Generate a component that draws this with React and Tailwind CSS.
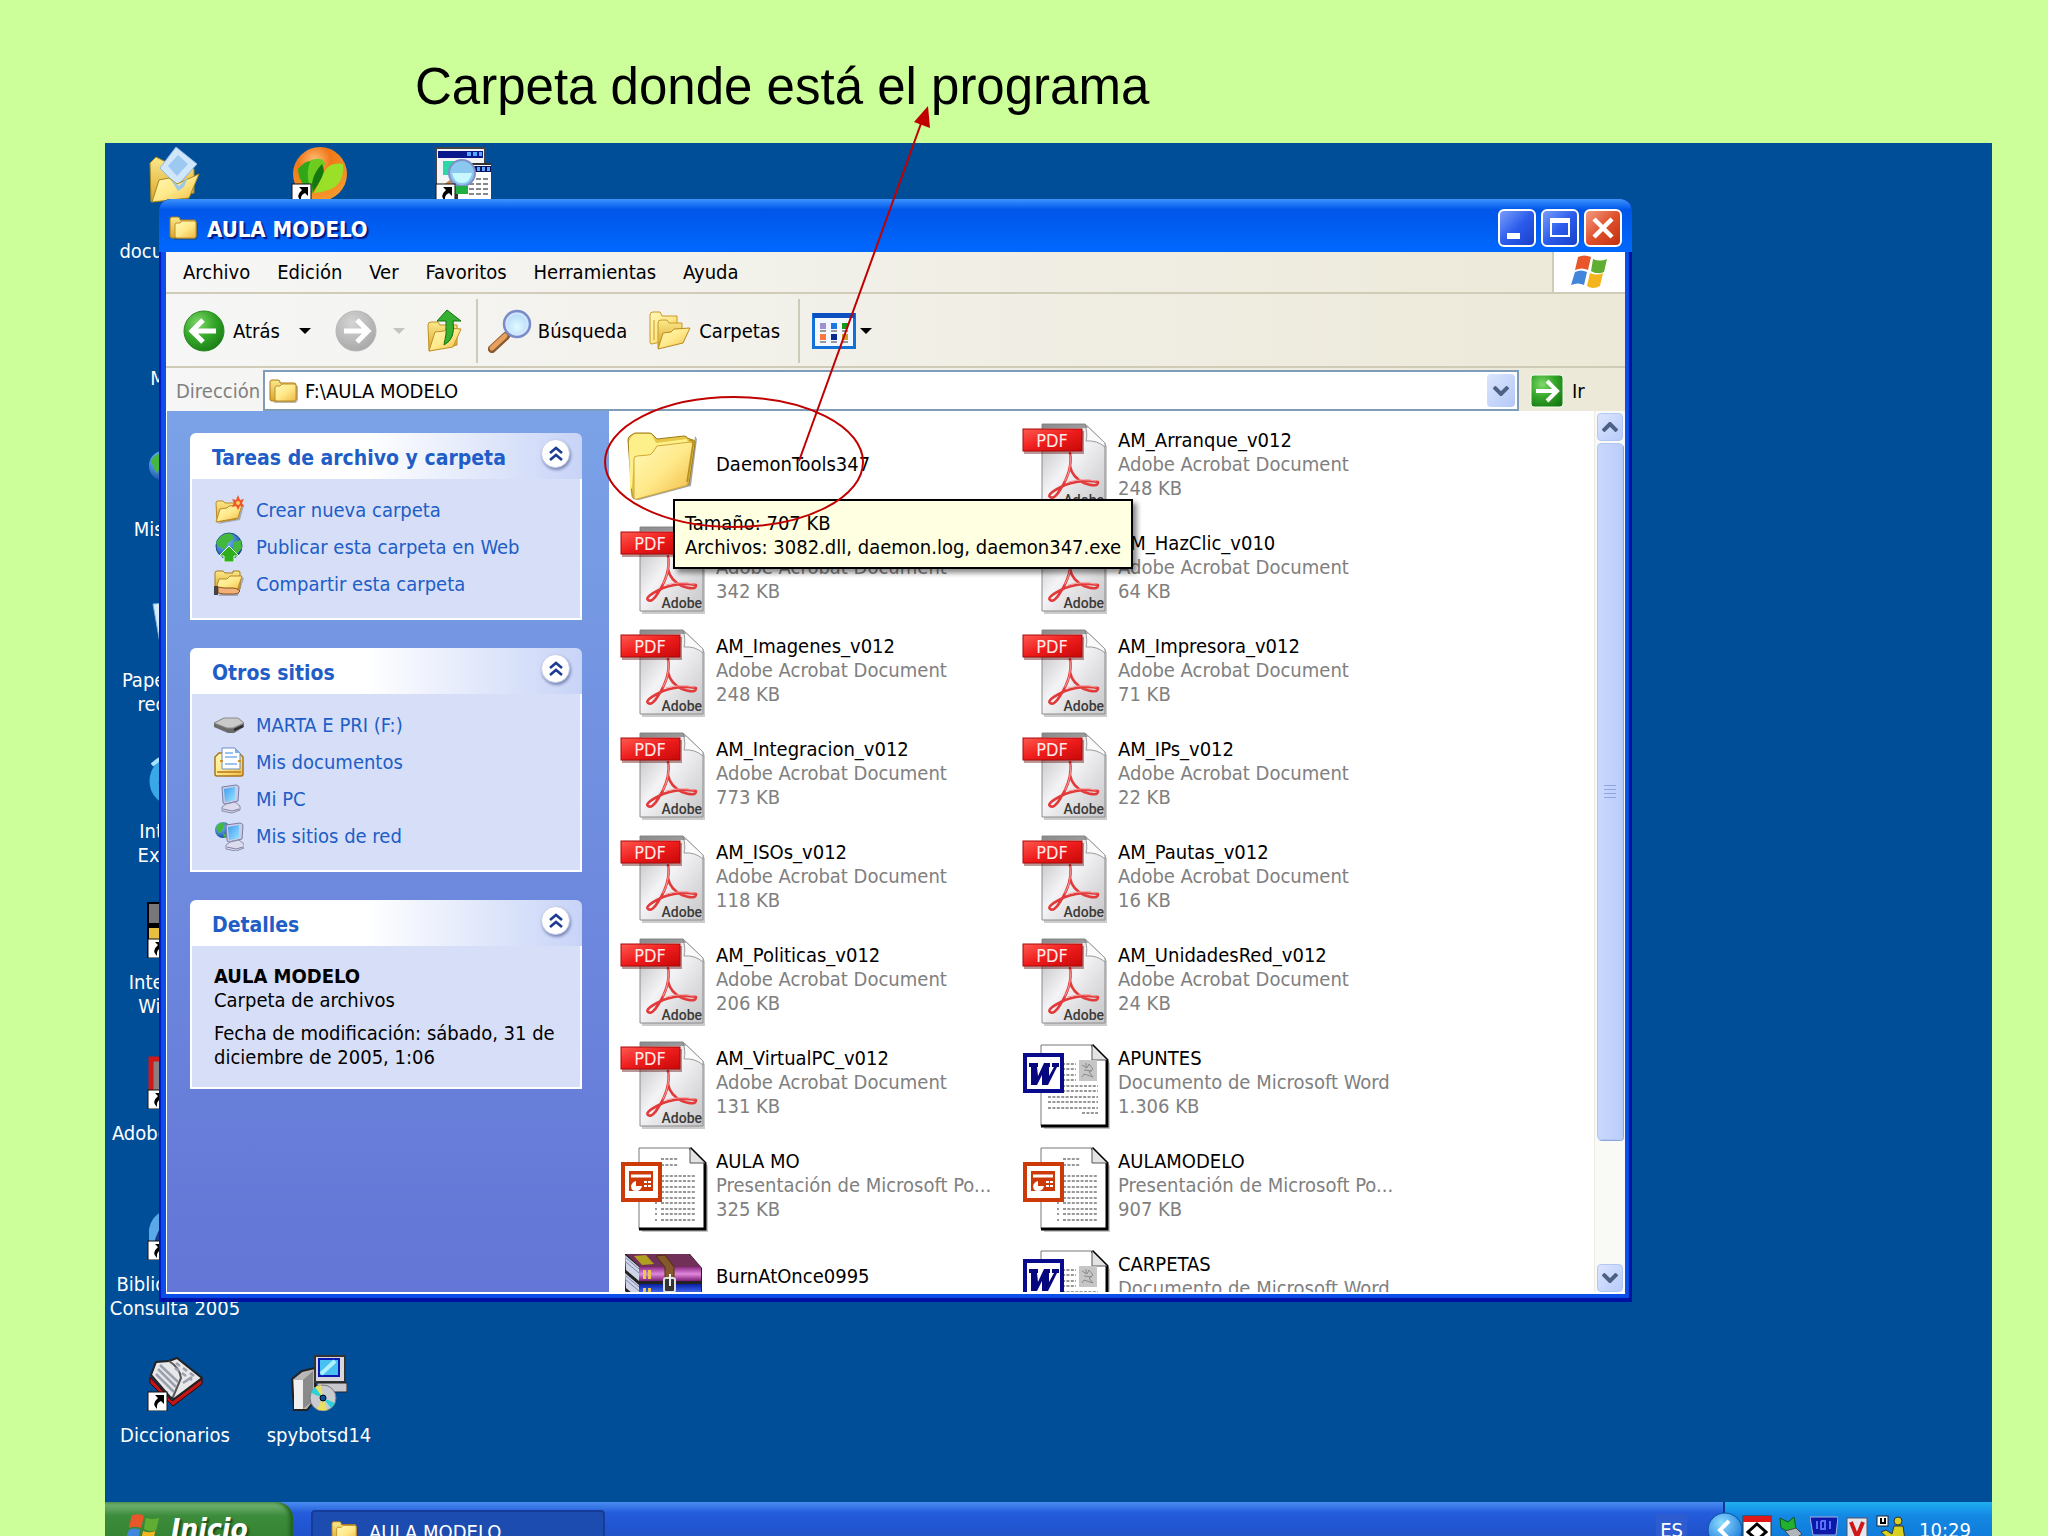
import React from "react";

/* ---------- shared gradients ---------- */
function Gradients() {
  return (
    <defs>
      <linearGradient id="gFolder" x1="0" y1="0" x2="1" y2="1">
        <stop offset="0" stopColor="#fff9b8" />
        <stop offset="0.5" stopColor="#ffe98a" />
        <stop offset="1" stopColor="#f0b840" />
      </linearGradient>
      <linearGradient id="gFolderBack" x1="0" y1="0" x2="0" y2="1">
        <stop offset="0" stopColor="#fbe98b" />
        <stop offset="1" stopColor="#d9a52a" />
      </linearGradient>
      <linearGradient id="gPage" x1="0" y1="0" x2="1" y2="1">
        <stop offset="0" stopColor="#b4b4b6" />
        <stop offset="0.45" stopColor="#f4f4f6" />
        <stop offset="0.7" stopColor="#dedee0" />
        <stop offset="1" stopColor="#c6c6c8" />
      </linearGradient>
      <linearGradient id="gPdf" x1="0" y1="0" x2="1" y2="1">
        <stop offset="0" stopColor="#ff5a50" />
        <stop offset="0.5" stopColor="#ee1c1c" />
        <stop offset="1" stopColor="#c80808" />
      </linearGradient>
      <radialGradient id="gGreen" cx="0.35" cy="0.3" r="0.8">
        <stop offset="0" stopColor="#7fd96a" />
        <stop offset="0.5" stopColor="#35a62a" />
        <stop offset="1" stopColor="#177a14" />
      </radialGradient>
      <radialGradient id="gGrey" cx="0.4" cy="0.3" r="0.8">
        <stop offset="0" stopColor="#d4d4d4" />
        <stop offset="1" stopColor="#a4a4a4" />
      </radialGradient>
      <radialGradient id="gLens" cx="0.5" cy="0.6" r="0.6">
        <stop offset="0" stopColor="#e4fbff" />
        <stop offset="1" stopColor="#a9d4f8" />
      </radialGradient>
      <linearGradient id="gScreen" x1="0" y1="0" x2="1" y2="1">
        <stop offset="0" stopColor="#3f9af0" />
        <stop offset="1" stopColor="#9be4ff" />
      </linearGradient>
      <radialGradient id="gGlobe" cx="0.35" cy="0.3" r="0.8">
        <stop offset="0" stopColor="#7cc4ff" />
        <stop offset="1" stopColor="#0c3f9c" />
      </radialGradient>
      <radialGradient id="gOrange" cx="0.4" cy="0.25" r="0.85">
        <stop offset="0" stopColor="#ffc07a" />
        <stop offset="0.35" stopColor="#f07818" />
        <stop offset="1" stopColor="#f8a030" />
      </radialGradient>
      <linearGradient id="gPurple" x1="0" y1="0" x2="0" y2="1">
        <stop offset="0" stopColor="#8c2a84" />
        <stop offset="0.5" stopColor="#e088dc" />
        <stop offset="1" stopColor="#7a1c74" />
      </linearGradient>
      <linearGradient id="gBlueBook" x1="0" y1="0" x2="0" y2="1">
        <stop offset="0" stopColor="#0820a0" />
        <stop offset="0.5" stopColor="#4068f0" />
        <stop offset="1" stopColor="#081880" />
      </linearGradient>
      <radialGradient id="gTray" cx="0.4" cy="0.3" r="0.8">
        <stop offset="0" stopColor="#8fdcff" />
        <stop offset="1" stopColor="#0d6fd6" />
      </radialGradient>
    </defs>
  );
}

/* ---------- icons ---------- */
function SmallFolder({ className }) {
  return (
    <svg viewBox="0 0 30 26" className={className} aria-hidden="true">
      <path d="M5 25h22l2-3V8H9z" fill="#3a3a20" opacity=".35" />
      <path d="M1 4q0-2 2-2h6q2 0 2 2v1h14q2 0 2 2v14q0 2-2 2H3q-2 0-2-2z" fill="url(#gFolderBack)" stroke="#a8791a" />
      <path d="M6 10q0-2 2-2h3l2-2h12q2 0 2 2v13q0 2-2 2H8q-2 0-2-2z" fill="url(#gFolder)" stroke="#c0902c" />
    </svg>
  );
}

function OpenFolder({ className, children }) {
  return (
    <svg viewBox="0 0 30 30" className={className} aria-hidden="true">
      <path d="M4 29l22-4 4-15-3-2z" fill="#333" opacity=".3" />
      <path d="M2 8q0-2 2-2h5l2 2h12v16L3 27z" fill="url(#gFolderBack)" stroke="#b98a22" />
      <path d="M2 27l4-13 7-1 2-2 13-1-4 13z" fill="url(#gFolder)" stroke="#b98a22" />
      {children}
    </svg>
  );
}

function BigFolder() {
  return (
    <svg viewBox="0 0 88 96" className="h-24 w-[88px] shrink-0" aria-hidden="true">
      <path d="M12 83l57-15 6-48 2 3-6 47-52 14z" fill="#000" opacity=".35" />
      <path
        d="M8 24q0-3 2-4l3-2q1-1 3-1h13q3 0 4 2l4 4 27-3q3 0 3 2l6 2q2 0 2 3l-6 41-53 14q-4 1-4-3z"
        fill="#e8c648" stroke="#9c7c18"
      />
      <path d="M9 26q1-4 4-7l3-1h13q3 0 4 3l3 6 31-4 1 4-31 3-7 9-16 2-2 30-2 6z" fill="#fdf08a" />
      <path d="M14 43q0-3 3-3l11-1q3 0 5-3l4-6 33-4q3 0 3 3l-5 38q0 2-3 3l-48 13q-3 1-3-3z" fill="url(#gFolder)" stroke="#d2a834" />
      <path d="M69 24q5 0 4 4l-6 38" fill="none" stroke="#b4901e" strokeWidth="1.6" />
    </svg>
  );
}

function PdfIcon() {
  return (
    <svg viewBox="0 0 88 96" className="h-24 w-[88px] shrink-0" aria-hidden="true">
      <path d="M21 9h43l20 19v65H21z" fill="#000" opacity=".2" transform="translate(1 2)" />
      <path d="M20 8h43l20 19v65H20z" fill="url(#gPage)" stroke="#8c8c8e" />
      <path d="M63 8q3 10 1 17 11-1 19 6v-4z" fill="#fafafa" stroke="#9a9a9a" />
      <path d="M20 8h43l3 4H20z" fill="#7a7a7c" opacity=".7" />
      <g fill="none" stroke="#e23a3a" strokeLinecap="round" strokeLinejoin="round">
        <path d="M48 37Q51 54 38 74Q32 84 28 81T43 69Q60 63 76 66Q76 72 62 67Q50 61 48 50" strokeWidth="2.6" />
        <path d="M48 39q2 14-5 26M46 66q14-4 28-1" stroke="#f7a0a0" strokeWidth="1" />
      </g>
      <rect x="2" y="15" width="60" height="23" fill="#500" opacity=".4" />
      <rect x="1" y="13" width="59" height="22" fill="url(#gPdf)" stroke="#a80808" />
      <text x="30" y="31" textAnchor="middle" fontSize="18" fill="#ffe8e8" fontFamily="'DejaVu Sans Condensed','DejaVu Sans',sans-serif">PDF</text>
      <text x="82" y="89" textAnchor="end" fontSize="14" fill="#3a3a3a" fontWeight="500" fontFamily="Roboto,'Liberation Sans',sans-serif">Adobe</text>
    </svg>
  );
}

function PaperBase({ children }) {
  return (
    <svg viewBox="0 0 88 96" className="h-24 w-[88px] shrink-0" aria-hidden="true">
      <path d="M22 13h50l16 16v66H22z" fill="#000" opacity=".22" />
      <path d="M19 11h51l15 15v66H19z" fill="#fff" stroke="#777" />
      <path d="M70 11l15 15v66H19" fill="none" stroke="#000" strokeWidth="3" />
      <path d="M70 11v15h15z" fill="#e4e4e4" stroke="#555" />
      {children}
    </svg>
  );
}

function WordIcon() {
  return (
    <PaperBase>
      <path
        d="M40 30h14M40 35h14M40 41h14M40 46h14M40 52h36M40 57h36M26 63h50M26 68h50M26 74h50M60 79h16"
        stroke="#777" strokeWidth="1.6" strokeDasharray="3 1.4"
      />
      <rect x="57" y="26" width="18" height="21" fill="#c6c6c6" />
      <path d="M60 31l5 3 2-4 4 5-4 3 4 5-9-3-2 3m2-7l8 1M64 29v5" stroke="#8a8a8a" fill="none" />
      <rect x="3" y="21" width="37" height="36" fill="#fff" stroke="#0a0a8c" strokeWidth="4" />
      <path d="M7 29h9v4h-1l1 9 6-13h6v4h-1l0 9 5-9h-2v-4h7v4h-2l-9 18h-6l0-10-5 10h-6L9 33H7z" fill="#06067e" />
    </PaperBase>
  );
}

function PowerPointIcon() {
  return (
    <PaperBase>
      <path
        d="M41 22h17M41 28h17M41 39h35M41 44h35M41 50h35M41 55h35M41 61h35M41 66h35M41 72h35M41 77h35M41 83h35M35 66h2M35 72h2M35 77h2M35 83h2"
        stroke="#777" strokeWidth="1.6" strokeDasharray="3 1.4"
      />
      <rect x="3" y="27" width="37" height="36" fill="#fff" stroke="#cc3a08" strokeWidth="4" />
      <rect x="9" y="34" width="24" height="20" fill="#cc3a08" />
      <path d="M11 39h20" stroke="#fff" strokeWidth="3" />
      <path d="M24 45h3m1 0h3M24 49h3m1 0h3" stroke="#fff" strokeWidth="2" />
      <path d="M16 44v5h6q-1 5-6 5t-5-5q1-4 5-5z" fill="#fff" />
    </PaperBase>
  );
}

function RarIcon() {
  return (
    <svg viewBox="0 0 88 96" className="h-24 w-[88px] shrink-0" aria-hidden="true">
      <path d="M5 14h65l12 14v62H20L5 72z" fill="#222" />
      <path d="M5 15l14 12v14L6 30zM5 33l14 12v14L6 48zM5 51l14 12v14L6 66z" fill="#cfd4e6" />
      <path d="M6 18l13 11M6 22l13 11M6 36l13 11M6 40l13 11" stroke="#8088a8" />
      <path d="M6 14h63l12 13H20z" fill="#703058" />
      <path d="M14 16l12-1 8 9-12 1z" fill="#b0a020" />
      <rect x="19" y="27" width="62" height="14" fill="url(#gPurple)" />
      <rect x="19" y="44" width="62" height="17" fill="url(#gBlueBook)" />
      <rect x="19" y="63" width="62" height="17" fill="#208030" />
      <path d="M23 30h3v9h-3zM28 30h3v9h-3zM23 48h3v9h-3zM28 48h3v9h-3z" fill="#e8c850" />
      <path d="M36 16l9-1 9 12v53H45V27z" fill="#86592c" stroke="#50300c" />
      <rect x="44" y="38" width="11" height="14" rx="2" fill="#333" stroke="#ddd" strokeWidth="2" />
      <path d="M50 34v12" stroke="#eee" strokeWidth="2" />
    </svg>
  );
}

function WindowsFlag({ className }) {
  return (
    <svg viewBox="0 0 38 34" className={className} aria-hidden="true">
      <path d="M7 2q6-3 13 0l-3 13q-6-3-13 0z" fill="#e8562a" />
      <path d="M22 4q7 3 14 0l-3 13q-7 3-13-1z" fill="#5fae32" />
      <path d="M4 17q6-3 12 0l-3 13q-6-3-13 0z" fill="#4286dc" />
      <path d="M19 18q7 3 13 0l-3 13q-7 4-13 0z" fill="#f4b41e" />
    </svg>
  );
}

function RoundArrow({ forward }) {
  return (
    <svg viewBox="0 0 42 42" className="size-[42px]" aria-hidden="true">
      <circle cx="21" cy="21" r="20" fill={forward ? "url(#gGrey)" : "url(#gGreen)"} stroke={forward ? "#b8b8b8" : "#2a8a20"} />
      <path
        d={forward ? "M9 21h23M22 10l11 11-11 11" : "M33 21H10M20 10L9 21l11 11"}
        fill="none" stroke="#fff" strokeWidth="5"
      />
    </svg>
  );
}

function Caret({ className }) {
  return (
    <svg viewBox="0 0 12 6" className={className} aria-hidden="true">
      <path d="M0 0h12L6 6z" fill="currentColor" />
    </svg>
  );
}

function FolderUp() {
  return (
    <svg viewBox="0 0 36 44" className="h-11 w-9" aria-hidden="true">
      <path d="M1 16q0-3 3-3h7l2 3h17v20L2 42z" fill="url(#gFolderBack)" stroke="#c09028" />
      <path d="M2 42l6-19 9-1 3-3 14 1-8 18z" fill="url(#gFolder)" stroke="#c09028" />
      <path d="M20 1l14 11h-8q3 18-9 24 3-10 2-24h-9z" fill="#35b030" stroke="#147014" />
    </svg>
  );
}

function Magnifier() {
  return (
    <svg viewBox="0 0 44 44" className="size-11" aria-hidden="true">
      <path d="M4 40L18 27" stroke="#8a5a30" strokeWidth="8" strokeLinecap="round" />
      <path d="M4 39L17 27" stroke="#e8a060" strokeWidth="5" strokeLinecap="round" />
      <circle cx="29" cy="15" r="13" fill="url(#gLens)" stroke="#7a8cc8" strokeWidth="2.5" />
      <circle cx="29" cy="15" r="10.5" fill="none" stroke="#d8e4ff" strokeWidth="1.5" />
    </svg>
  );
}

function FoldersIcon() {
  return (
    <svg viewBox="0 0 42 40" className="h-10 w-[42px]" aria-hidden="true">
      <path d="M1 4q0-3 3-3h7l2 4h15v22L3 33q-2 0-2-2z" fill="url(#gFolder)" stroke="#c8982a" />
      <path d="M5 9v20" stroke="#c8982a" />
      <path d="M9 12q0-3 3-3h6l2 3h13v18L9 37z" fill="url(#gFolderBack)" stroke="#c8982a" />
      <path d="M9 38l5-16 8-1 3-3 16-1-7 15z" fill="url(#gFolder)" stroke="#b98a22" />
    </svg>
  );
}

function ViewsIcon() {
  return (
    <svg viewBox="0 0 44 36" className="h-9 w-11" aria-hidden="true">
      <rect x="1.5" y="1.5" width="41" height="33" fill="#f2f8ff" stroke="#1272d8" strokeWidth="3" />
      <rect x="1" y="0" width="42" height="5" fill="#0a50c0" />
      <rect x="8" y="10" width="6" height="6" fill="#a090d0" />
      <rect x="19" y="10" width="6" height="6" fill="#1a78e0" />
      <rect x="30" y="10" width="6" height="6" fill="#169a20" />
      <rect x="8" y="21" width="6" height="6" fill="#ff7840" />
      <rect x="19" y="21" width="6" height="6" fill="#0a2a90" />
      <rect x="30" y="21" width="6" height="6" fill="#d0a020" />
      <path d="M8 18h6M19 18h6M30 18h6M8 29h6M19 29h6M30 29h6" stroke="#999" strokeWidth="2" />
    </svg>
  );
}

function NewFolder() {
  return (
    <OpenFolder className="size-[30px]">
      <path d="M24 0l2 5 4-1-2 4 2 4-4-1-2 4-2-4-4 1 2-4-2-4 4 1z" fill="#f0562a" />
      <circle cx="24" cy="8" r="2" fill="#ffd060" />
    </OpenFolder>
  );
}

function Globe({ className, children }) {
  return (
    <svg viewBox="0 0 30 30" className={className} aria-hidden="true">
      <circle cx="15" cy="14" r="13" fill="url(#gGlobe)" stroke="#1a4a80" />
      <path d="M5 6q6-6 13-4l2 5-6 4-3 6-6-2-3-4zM20 10l7-2 1 8-5 6-5-3z" fill="#43b83c" />
      {children}
    </svg>
  );
}

function PublishIcon() {
  return (
    <Globe className="size-[30px]">
      <path d="M15 14l10 10h-5v6H10v-6H5z" fill="#2fae1e" stroke="#e8ffe0" />
    </Globe>
  );
}

function ShareIcon() {
  return (
    <svg viewBox="0 0 30 30" className="size-[30px]" aria-hidden="true">
      <path d="M4 27h20l6-18-3-1z" fill="#333" opacity=".3" />
      <path d="M1 4q0-2 2-2h6l2 2h8V2h6q1 0 1 2v16H1z" fill="url(#gFolderBack)" stroke="#a8791a" />
      <path d="M2 20l3-10h8l3-3h12l-5 15H3z" fill="url(#gFolder)" stroke="#b98a22" />
      <path d="M4 18l6 1h9q4 0 7 3-2 3-5 3H10l-6-1z" fill="#f0b078" stroke="#8a5420" />
      <path d="M0 17h4v9H0z" fill="#444" />
    </svg>
  );
}

function DriveIcon() {
  return (
    <svg viewBox="0 0 30 30" className="size-[30px]" aria-hidden="true">
      <path d="M0 13l10-5h14l6 5v4l-10 6h-6L0 17z" fill="#6a6a6a" />
      <path d="M0 13l10-5h14l6 5-11 5h-6z" fill="#c9c9c9" stroke="#8a8a8a" />
      <path d="M20 20l9-4" stroke="#2a2a2a" strokeWidth="2" />
    </svg>
  );
}

function DocsIcon() {
  return (
    <svg viewBox="0 0 30 30" className="size-[30px]" aria-hidden="true">
      <path d="M1 10l4-4h20l4 4v17q0 2-2 2H3q-2 0-2-2z" fill="url(#gFolder)" stroke="#a8761c" strokeWidth="1.5" />
      <path d="M8 1h13l5 5v16H8z" fill="#fff" stroke="#6a8cc8" />
      <path d="M21 1v5h5z" fill="#7ab0f0" />
      <path d="M11 6h8M11 10h12M11 17h12" stroke="#7aaef0" strokeWidth="1.5" />
      <path d="M6 14h3M24 14h3M3 25h24" stroke="#c89030" strokeWidth="2" />
    </svg>
  );
}

function PcShape() {
  return (
    <>
      <path d="M8 3l14-2q2 0 3 2l-1 14-13 3q-2 0-2-2z" fill="#c8cce4" stroke="#7a7ea8" />
      <path d="M10 5l11-2v13l-10 2z" fill="url(#gScreen)" />
      <path d="M12 20l9-2 5 4v4l-8 3-10-2v-4z" fill="#dcdcee" stroke="#8a8aa8" />
      <path d="M9 25l9 2 7-2" fill="none" stroke="#8080a0" />
    </>
  );
}

function PcIcon({ className = "size-[30px]" }) {
  return (
    <svg viewBox="0 0 30 30" className={className} aria-hidden="true">
      <PcShape />
    </svg>
  );
}

function NetworkIcon({ className = "size-[30px]" }) {
  return (
    <svg viewBox="0 0 30 30" className={className} aria-hidden="true">
      <circle cx="9" cy="9" r="8" fill="url(#gGlobe)" />
      <path d="M2 6q4-5 9-4l-2 6-4 5zM9 12l4 2-3 3z" fill="#43b83c" />
      <g transform="translate(4 1)"><PcShape /></g>
    </svg>
  );
}

function ShortcutArrow() {
  return (
    <g>
      <rect x="1" y="37" width="19" height="19" fill="#fff" stroke="#111" />
      <path d="M8 40h9v9l-3-3q-5 2-4 8-6-5 1-11z" fill="#000" />
    </g>
  );
}

function DesktopSvg({ children }) {
  return (
    <svg viewBox="0 0 56 56" className="size-14" aria-hidden="true">{children}</svg>
  );
}

const desktopIcons = {
  docs: (
    <DesktopSvg>
      <path d="M3 16l6-6 8 4 30 8v24L4 55z" fill="url(#gFolderBack)" stroke="#a8861c" />
      <path d="M29 0l21 17-20 22-17-18z" fill="#cfe6fb" stroke="#8ab8e8" />
      <path d="M31 8l10 9-11 12-9-10z" fill="#9cc8f2" />
      <path d="M5 55l7-22 10-2 8 6 22-10-10 24z" fill="url(#gFolder)" stroke="#a8861c" />
      <path d="M24 33l8 6 9-9-4 10-6 4z" fill="#9cc8e8" />
    </DesktopSvg>
  ),
  leaf: (
    <DesktopSvg>
      <circle cx="29" cy="27" r="27" fill="url(#gOrange)" />
      <path d="M7 22q8-10 17-8l-2 32Q8 38 7 22z" fill="#2fa818" />
      <path d="M20 13q12-4 14 4l-6 14-7 14q-8-18-1-32z" fill="#6ccc20" />
      <path d="M31 17q4 8-1 16l-8 12q-4-14 9-28z" fill="#14780e" />
      <path d="M52 17Q36 14 31 30l-8 16q32-2 29-29z" fill="#9adf28" />
      <ShortcutArrow />
    </DesktopSvg>
  ),
  search: (
    <DesktopSvg>
      <rect x="1" y="1" width="49" height="46" fill="#f4f4f4" stroke="#444" strokeWidth="2" />
      <rect x="3" y="4" width="45" height="7" fill="#0a1a8c" />
      <path d="M32 7h4m2 0h4m2 0h3" stroke="#58a8ff" strokeWidth="4" />
      <path d="M8 14h16v14H8z" fill="#2ad8a8" />
      <rect x="22" y="17" width="35" height="38" fill="#fff" stroke="#333" strokeWidth="2" />
      <rect x="24" y="19" width="32" height="6" fill="#0a1060" />
      <path d="M42 22h3m2 0h3m2 0h3" stroke="#58a8ff" strokeWidth="4" />
      <path d="M34 32h20M34 37h20M34 42h20M34 47h20" stroke="#888" strokeWidth="2" strokeDasharray="5 2" />
      <path d="M8 42l12-9" stroke="#c88850" strokeWidth="6" />
      <circle cx="27" cy="26" r="13" fill="#8ac8f0" stroke="#8090c8" strokeWidth="2" />
      <path d="M17 26h20q-2 10-10 10T17 26z" fill="#c8f8ff" />
      <rect x="20" y="39" width="13" height="8" fill="#20b040" />
      <ShortcutArrow />
    </DesktopSvg>
  ),
  pc: <PcIcon className="size-20" />,
  network: <NetworkIcon className="size-14" />,
  bin: (
    <DesktopSvg>
      <path d="M6 4l40-3-7 50-24 4z" fill="#d8ecf8" stroke="#7ab0e0" />
      <path d="M12 8l30-3-6 40-18 4z" fill="#a8d4f4" />
    </DesktopSvg>
  ),
  ie: (
    <DesktopSvg>
      <circle cx="28" cy="30" r="21" fill="none" stroke="#3aa8e8" strokeWidth="9" />
      <path d="M10 28h36" stroke="#3aa8e8" strokeWidth="7" />
      <path d="M5 14Q30-8 50 8" fill="none" stroke="#a8e4ff" strokeWidth="4" />
    </DesktopSvg>
  ),
  dvd: (
    <DesktopSvg>
      <rect x="1" y="1" width="54" height="54" fill="#777" stroke="#000" strokeWidth="2" />
      <rect x="1" y="21" width="54" height="5" fill="#000" />
      <rect x="2" y="26" width="52" height="12" fill="#e8c040" />
      <ShortcutArrow />
    </DesktopSvg>
  ),
  adobe: (
    <DesktopSvg>
      <rect x="4" y="6" width="46" height="46" fill="#8a8080" stroke="#d01818" strokeWidth="5" />
      <ShortcutArrow />
    </DesktopSvg>
  ),
  library: (
    <DesktopSvg>
      <path d="M2 45V25Q6 5 30 5t24 30v15z" fill="#5aa8e8" />
      <path d="M6 45Q10 18 30 10v38z" fill="#1a3c90" />
      <ShortcutArrow />
    </DesktopSvg>
  ),
  book: (
    <DesktopSvg>
      <path d="M3 22l22 24 30-22v5L26 51 3 28z" fill="#c01818" stroke="#400000" />
      <path d="M4 20L9 7l13-1 8-3 25 20-28 21-4-2z" fill="#e8e8ea" stroke="#222" strokeWidth="2" />
      <path d="M22 6q11 7 12 17l-8 19" fill="none" stroke="#555" strokeWidth="2" />
      <path d="M11 14l18 18M9 19l18 18M13 10l18 17M29 8l4 3m3 2l4 3m3 2l4 3M28 13l4 3m3 2l4 3m3 2l3 2M36 28l9-6" fill="none" stroke="#9aa0ae" strokeWidth="2.5" />
      <ShortcutArrow />
    </DesktopSvg>
  ),
  install: (
    <DesktopSvg>
      <path d="M1 24l10-8 13-3v32l-8 10H3z" fill="#b8b8b8" stroke="#222" strokeWidth="2" />
      <path d="M3 25h9v29H3z" fill="#f0f0f0" />
      <path d="M12 25l10-9v30l-10 8z" fill="#8a8a8a" />
      <rect x="24" y="1" width="30" height="26" fill="#d8d8dc" stroke="#333" strokeWidth="2" />
      <rect x="28" y="4" width="20" height="17" fill="#48c0f0" stroke="#0818b0" strokeWidth="2" />
      <path d="M30 19L44 6" stroke="#b0f0ff" strokeWidth="4" />
      <path d="M26 28h30v9H26z" fill="#c8c8cc" stroke="#222" />
      <circle cx="32" cy="43" r="13" fill="#c8ccd0" stroke="#777" />
      <path d="M32 43L22 34a13 13 0 0 1 8-4zM32 43l4 12a13 13 0 0 1-10-1z" fill="#e8e060" />
      <path d="M32 43L20 38a13 13 0 0 1 4-6zM32 43l8 10a13 13 0 0 0 4-5z" fill="#30d0d8" />
      <circle cx="32" cy="43" r="3" fill="#0850a0" stroke="#000" />
    </DesktopSvg>
  ),
};

/* ---------- data ---------- */
const PDF = "Adobe Acrobat Document";
const files = [
  { icon: "folder", name: "DaemonTools347" },
  { icon: "pdf", name: "AM_Arranque_v012", type: PDF, size: "248 KB" },
  { icon: "pdf", name: "AM_Firewall_v012", type: PDF, size: "342 KB" },
  { icon: "pdf", name: "AM_HazClic_v010", type: PDF, size: "64 KB" },
  { icon: "pdf", name: "AM_Imagenes_v012", type: PDF, size: "248 KB" },
  { icon: "pdf", name: "AM_Impresora_v012", type: PDF, size: "71 KB" },
  { icon: "pdf", name: "AM_Integracion_v012", type: PDF, size: "773 KB" },
  { icon: "pdf", name: "AM_IPs_v012", type: PDF, size: "22 KB" },
  { icon: "pdf", name: "AM_ISOs_v012", type: PDF, size: "118 KB" },
  { icon: "pdf", name: "AM_Pautas_v012", type: PDF, size: "16 KB" },
  { icon: "pdf", name: "AM_Politicas_v012", type: PDF, size: "206 KB" },
  { icon: "pdf", name: "AM_UnidadesRed_v012", type: PDF, size: "24 KB" },
  { icon: "pdf", name: "AM_VirtualPC_v012", type: PDF, size: "131 KB" },
  { icon: "word", name: "APUNTES", type: "Documento de Microsoft Word", size: "1.306 KB" },
  { icon: "ppt", name: "AULA MO", type: "Presentación de Microsoft Po...", size: "325 KB" },
  { icon: "ppt", name: "AULAMODELO", type: "Presentación de Microsoft Po...", size: "907 KB" },
  { icon: "rar", name: "BurnAtOnce0995", type: "\u00a0" },
  { icon: "word", name: "CARPETAS", type: "Documento de Microsoft Word", size: "\u00a0" },
];

const fileIcons = {
  folder: <BigFolder />,
  pdf: <PdfIcon />,
  word: <WordIcon />,
  ppt: <PowerPointIcon />,
  rar: <RarIcon />,
};

const shortcuts = [
  [
    { icon: "docs", label: ["Mis", "documentos"] },
    { icon: "pc", label: ["Mi PC"] },
    { icon: "network", label: ["Mis sitios"] },
    { icon: "bin", label: ["Papelera de", "reciclaje"] },
    { icon: "ie", label: ["Internet", "Explorer"] },
    { icon: "dvd", label: ["InterVideo", "WinDVD"] },
    { icon: "adobe", label: ["Adobe Reader"] },
    { icon: "library", label: ["Biblioteca de", "Consulta 2005"] },
    { icon: "book", label: ["Diccionarios"] },
  ],
  [
    { icon: "leaf", label: [] },
    null, null, null, null, null, null, null,
    { icon: "install", label: ["spybotsd14"] },
  ],
  [{ icon: "search", label: [] }],
];

/* ---------- pieces ---------- */
function Shortcut({ item }) {
  if (!item) return <div className="h-[151px]" />;
  return (
    <div className="flex h-[151px] flex-col items-center gap-3 text-[20px] leading-6 whitespace-nowrap text-white">
      <div className="flex size-14 items-center justify-center">{desktopIcons[item.icon]}</div>
      <div className="text-center">
        {item.label.map((line) => (
          <div key={line}>{line}</div>
        ))}
      </div>
    </div>
  );
}

function CaptionButton({ label, close, children }) {
  return (
    <button
      type="button"
      aria-label={label}
      className={
        "flex size-[38px] items-center justify-center rounded-md border-2 border-white " +
        (close
          ? "bg-linear-to-br from-[#f09a80] via-[#e0502c] to-[#c03010]"
          : "bg-linear-to-br from-[#7a9cf8] via-[#2c5cec] to-[#1840c8]")
      }
    >
      {children}
    </button>
  );
}

function TaskCard({ title, children }) {
  return (
    <section>
      <header className="flex h-[46px] items-start justify-between rounded-t-md bg-linear-to-r from-white from-45% to-[#c8d4f7] pr-3 pl-[22px]">
        <h2 className="pt-[13px] text-[21px] leading-6 font-bold text-[#215dc6]">{title}</h2>
        <button
          type="button"
          aria-label={"Contraer " + title}
          className="mt-[6px] flex size-[29px] items-center justify-center rounded-full border border-[#c8cde6] bg-white shadow-[1px_2px_3px_#7a88b8]"
        >
          <svg viewBox="0 0 14 16" className="h-4 w-3.5" aria-hidden="true">
            <path d="M1 7l6-5 6 5M1 14l6-5 6 5" fill="none" stroke="#1c3c94" strokeWidth="2.6" />
          </svg>
        </button>
      </header>
      <div className="border-2 border-t-0 border-white bg-[#d6dff7] px-[22px]">{children}</div>
    </section>
  );
}

function TaskLinks({ items }) {
  return (
    <ul className="pt-3 pb-4">
      {items.map(([icon, text]) => (
        <li key={text}>
          <a href="#" className="flex h-[37px] items-center gap-3 text-[20px] leading-6 text-[#215dc6]">
            {icon}
            {text}
          </a>
        </li>
      ))}
    </ul>
  );
}

function FileItem({ file, children }) {
  return (
    <div className="relative flex items-center gap-2">
      {fileIcons[file.icon]}
      <div className="text-[20px] leading-6 whitespace-nowrap text-black">
        <div>{file.name}</div>
        {file.type && <div className="text-[#808080]">{file.type}</div>}
        {file.size && <div className="text-[#808080]">{file.size}</div>}
      </div>
      {children}
    </div>
  );
}

function ScrollButton({ label, down }) {
  return (
    <button
      type="button"
      aria-label={label}
      className="flex h-7 w-[26px] shrink-0 items-center justify-center rounded-sm border border-[#b4c6f4] bg-linear-to-br from-[#dbe5fe] to-[#b7cbfa]"
    >
      <svg viewBox="0 0 16 10" className="h-2.5 w-4" aria-hidden="true">
        <path d={down ? "M1 1l7 7 7-7" : "M1 9l7-7 7 7"} fill="none" stroke="#4d6185" strokeWidth="4" />
      </svg>
    </button>
  );
}

function ExplorerWindow() {
  return (
    <div className="absolute top-[56px] right-[360px] left-[54px] flex h-[1103px] flex-col rounded-t-xl bg-[#0a50e8] px-[7px] pb-2 shadow-[inset_2px_0_1px_#0014c0,inset_-3px_0_1px_#0014a0,inset_0_-4px_1px_#0010a0]">
      <div className="-mx-[7px] flex h-[53px] shrink-0 items-center rounded-t-xl bg-linear-to-b from-[#3b93ff] via-[#0056e8] via-20% to-[#0068ff] px-2.5 pt-1">
        <SmallFolder className="h-[26px] w-[30px]" />
        <h1 className="ml-2 flex-1 pt-1 text-[22px] leading-7 font-bold text-white [text-shadow:2px_2px_1px_#0a1883]">AULA MODELO</h1>
        <div className="flex gap-[5px]">
          <CaptionButton label="Minimizar">
            <svg viewBox="0 0 30 30" className="size-[30px]"><rect x="5" y="20" width="13" height="6" fill="#fff" /></svg>
          </CaptionButton>
          <CaptionButton label="Maximizar">
            <svg viewBox="0 0 30 30" className="size-[30px]">
              <rect x="6" y="6" width="18" height="17" fill="none" stroke="#fff" strokeWidth="2" />
              <rect x="5" y="5" width="20" height="5" fill="#fff" />
            </svg>
          </CaptionButton>
          <CaptionButton label="Cerrar" close>
            <svg viewBox="0 0 30 30" className="size-[30px]"><path d="M6 6l18 18M24 6L6 24" stroke="#fff" strokeWidth="4.5" /></svg>
          </CaptionButton>
        </div>
      </div>

      <div className="flex min-h-0 flex-1 flex-col bg-linear-to-r from-[#f6f6f6] to-[#ece9d8] text-[20px] leading-6">
        <nav className="flex h-[42px] shrink-0 items-stretch border-b-2 border-[#d0ccb8]">
          <div className="flex flex-1 items-center gap-[27px] pl-[17px]">
            {["Archivo", "Edición", "Ver", "Favoritos", "Herramientas", "Ayuda"].map((m) => (
              <button key={m} type="button">{m}</button>
            ))}
          </div>
          <div className="flex w-[73px] items-center justify-center border-l-2 border-[#d0ccb8] bg-white">
            <WindowsFlag className="h-[34px] w-[38px]" />
          </div>
        </nav>

        <div className="flex h-[74px] shrink-0 items-center border-b-2 border-[#cfcbb6] pt-0.5 pl-[17px]">
          <button type="button" className="flex items-center gap-2"><RoundArrow />Atrás</button>
          <button type="button" aria-label="Historial atrás" className="ml-[19px]"><Caret className="h-1.5 w-3" /></button>
          <button type="button" aria-label="Adelante" className="ml-6"><RoundArrow forward /></button>
          <button type="button" aria-label="Historial adelante" className="ml-4 text-[#c4c4c0]"><Caret className="h-1.5 w-3" /></button>
          <button type="button" aria-label="Arriba" className="ml-[22px]"><FolderUp /></button>
          <div className="ml-[13px] h-16 w-0.5 bg-[#cdcab8]" />
          <button type="button" className="ml-2.5 flex items-center gap-1.5"><Magnifier />Búsqueda</button>
          <button type="button" className="ml-[22px] flex items-center gap-2"><FoldersIcon />Carpetas</button>
          <div className="ml-[18px] h-16 w-0.5 bg-[#cdcab8]" />
          <button type="button" aria-label="Vistas" className="ml-3 flex items-center gap-1"><ViewsIcon /><Caret className="h-1.5 w-3" /></button>
        </div>

        <div className="flex h-[43px] shrink-0 items-center pt-0.5 pl-2.5">
          <label htmlFor="address" className="w-[87px] text-[#808080]">Dirección</label>
          <div className="flex h-[41px] flex-1 items-center border-2 border-[#7f9db9] bg-white pr-0.5 pl-1">
            <SmallFolder className="h-[26px] w-[30px]" />
            <input id="address" defaultValue="F:\AULA MODELO" className="ml-1.5 min-w-0 flex-1 bg-transparent text-black outline-none" />
            <button type="button" aria-label="Direcciones anteriores" className="flex h-[33px] w-7 items-center justify-center rounded-sm bg-linear-to-br from-[#dbe5fe] to-[#b4c8f6]">
              <svg viewBox="0 0 16 10" className="h-2.5 w-4"><path d="M1 1l7 7 7-7" fill="none" stroke="#4d6185" strokeWidth="4" /></svg>
            </button>
          </div>
          <button type="button" className="ml-[11px] flex w-[95px] items-center gap-2">
            <svg viewBox="0 0 34 34" className="size-[34px]" aria-hidden="true">
              <rect x="1" y="1" width="32" height="32" rx="3" fill="url(#gGreen)" stroke="#f4fff0" />
              <path d="M6 17h20M17 7l10 10-10 10" fill="none" stroke="#fff" strokeWidth="4" />
            </svg>
            Ir
          </button>
        </div>

        <div className="flex min-h-0 flex-1 border-b-2 border-l border-white bg-white">
          <aside className="flex w-[442px] shrink-0 flex-col gap-7 overflow-hidden bg-linear-to-b from-[#7ba2e7] to-[#6375d6] pt-[22px] pr-[27px] pl-[23px]">
            <TaskCard title="Tareas de archivo y carpeta">
              <TaskLinks
                items={[
                  [<NewFolder />, "Crear nueva carpeta"],
                  [<PublishIcon />, "Publicar esta carpeta en Web"],
                  [<ShareIcon />, "Compartir esta carpeta"],
                ]}
              />
            </TaskCard>
            <TaskCard title="Otros sitios">
              <TaskLinks
                items={[
                  [<DriveIcon />, "MARTA E PRI (F:)"],
                  [<DocsIcon />, "Mis documentos"],
                  [<PcIcon />, "Mi PC"],
                  [<NetworkIcon />, "Mis sitios de red"],
                ]}
              />
            </TaskCard>
            <TaskCard title="Detalles">
              <div className="pt-[18px] pb-[18px]">
                <p className="font-bold">AULA MODELO</p>
                <p>Carpeta de archivos</p>
                <p className="mt-[9px]">Fecha de modificación: sábado, 31 de diciembre de 2005, 1:06</p>
              </div>
            </TaskCard>
          </aside>

          <main className="grid min-w-0 flex-1 auto-rows-[103px] grid-cols-[402px_402px] overflow-hidden pt-px pl-[11px]">
            {files.map((file, i) => (
              <FileItem key={file.name} file={file}>
                {i === 0 && (
                  <div
                    role="tooltip"
                    className="absolute top-[87px] left-[53px] z-10 border-2 border-black bg-[#ffffe1] px-2.5 pt-2.5 pb-2 whitespace-nowrap text-black shadow-[4px_4px_5px_rgba(0,0,0,0.45)]"
                  >
                    <div>Tamaño: 707 KB</div>
                    <div>Archivos: 3082.dll, daemon.log, daemon347.exe</div>
                  </div>
                )}
              </FileItem>
            ))}
          </main>

          <div className="flex w-[31px] shrink-0 flex-col items-center gap-0.5 border-l border-[#ecebe4] bg-[#f9f9f6] pt-0.5">
            <ScrollButton label="Subir" />
            <div className="flex h-[697px] w-[26px] flex-col items-center justify-center gap-[3px] rounded-sm border border-[#b4c6f4] bg-linear-to-r from-[#cad8fd] to-[#bacdfb] shadow-[1px_1px_0_#8fa8dc]">
              <span className="h-px w-3 bg-[#8ea6e0]" />
              <span className="h-px w-3 bg-[#8ea6e0]" />
              <span className="h-px w-3 bg-[#8ea6e0]" />
              <span className="h-px w-3 bg-[#8ea6e0]" />
            </div>
            <div className="flex-1" />
            <ScrollButton label="Bajar" down />
          </div>
        </div>
      </div>
    </div>
  );
}

function Taskbar() {
  return (
    <footer className="h-[34px] shrink-0 overflow-hidden text-[20px] text-white">
      <div className="flex h-[55px] items-stretch bg-linear-to-b from-[#4a8cf0] via-[#245cdc] via-20% to-[#1c48b8]">
        <button
          type="button"
          className="flex w-[188px] items-center gap-2.5 rounded-r-2xl bg-linear-to-b from-[#7cba7c] via-[#3c8c3c] via-25% to-[#2c7c2c] pl-5 shadow-[inset_-3px_0_4px_#1c5c1c]"
        >
          <WindowsFlag className="h-[34px] w-9" />
          <span className="text-[28px] font-bold italic [text-shadow:2px_2px_2px_#1a4a1a]">Inicio</span>
        </button>
        <button
          type="button"
          className="mt-2 mb-1 ml-[18px] flex w-[294px] items-center gap-2.5 rounded-sm border-2 border-[#143c98] bg-[#1c4cb0] pl-[18px]"
        >
          <SmallFolder className="h-[26px] w-7" />
          AULA MODELO
        </button>
        <div className="flex-1" />
        <span className="mt-3 mr-9 h-8 bg-[#2c5cd0] px-1 leading-8">ES</span>
        <div className="relative flex w-[269px] shrink-0 items-center gap-[7px] border-l-2 border-[#0c3c90] bg-linear-to-b from-[#20b0f0] via-[#1488e4] via-25% to-[#0c70d0] pl-[17px]">
          <button type="button" aria-label="Mostrar iconos ocultos" className="absolute top-2.5 -left-[18px] size-9">
            <svg viewBox="0 0 36 36" className="size-9">
              <circle cx="18" cy="18" r="17" fill="url(#gTray)" stroke="#0c4ca0" />
              <path d="M22 9l-9 9 9 9" fill="none" stroke="#fff" strokeWidth="4" />
            </svg>
          </button>
          <svg viewBox="0 0 30 30" className="size-[30px]">
            <rect x="1" y="1" width="28" height="28" fill="#fff" stroke="#333" />
            <rect x="1" y="1" width="28" height="6" fill="#e01818" />
            <path d="M15 9l9 8-9 8-9-8z" fill="#fff" stroke="#000" strokeWidth="3" />
          </svg>
          <svg viewBox="0 0 24 30" className="h-[30px] w-6">
            <path d="M1 3l8 4 6-5 2 12-9 2-6-3z" fill="#22b030" stroke="#0a5a14" />
            <path d="M6 16l11-3 6 6-9 6z" fill="#b0b4bc" stroke="#444" />
          </svg>
          <svg viewBox="0 0 28 30" className="h-[30px] w-7">
            <path d="M0 2h28l-2 18H3z" fill="#0c18a8" stroke="#a8b0e8" />
            <path d="M7 6v8m4-8v8h4V6h-4m9 0v8" fill="none" stroke="#5870ff" strokeWidth="2" />
            <path d="M6 22h16v5H6z" fill="#bbb" />
          </svg>
          <svg viewBox="0 0 24 30" className="h-[30px] w-6">
            <rect x="2" y="3" width="20" height="26" fill="#e4e8ee" stroke="#556" />
            <path d="M6 7l6 15 6-15" fill="none" stroke="#d01818" strokeWidth="4" />
          </svg>
          <svg viewBox="0 0 30 30" className="size-[30px]">
            <rect x="1" y="1" width="11" height="10" fill="#fff" stroke="#222" />
            <path d="M5 3v5h4V3" fill="none" stroke="#000" strokeWidth="2" />
            <circle cx="22" cy="6" r="4" fill="#d8d020" stroke="#333" />
            <path d="M18 11h9l2 14H14l-9-8 5-2 6 4z" fill="#d8d020" stroke="#333" />
          </svg>
          <span className="pl-1.5">10:29</span>
        </div>
      </div>
    </footer>
  );
}

export default function App() {
  return (
    <div className="relative flex h-screen flex-col overflow-hidden bg-[#ccff99] pr-14 pl-[105px] font-['DejaVu_Sans_Condensed','DejaVu_Sans',sans-serif] text-black">
      <h1 className="flex h-[143px] shrink-0 items-center pt-[30px] pl-[310px] font-['Liberation_Sans',Arial,sans-serif] text-[51px] leading-[60px]">
        Carpeta donde está el programa
      </h1>

      <div className="relative min-h-0 flex-1 bg-[#004e98]">
        <div className="flex gap-1 pt-1">
          {shortcuts.map((column, c) => (
            <div key={c} className="w-[140px]">
              {column.map((item, r) => (
                <Shortcut key={r} item={item} />
              ))}
            </div>
          ))}
        </div>
        <ExplorerWindow />
      </div>

      <Taskbar />

      {/* callout pointing from the folder to the heading */}
      <svg width="1200" height="600" className="pointer-events-none absolute top-0 left-0 z-20" aria-hidden="true">
        <Gradients />
        <ellipse cx="734" cy="462" rx="129" ry="65" fill="none" stroke="#c00000" strokeWidth="2" />
        <path d="M799 461L923 118" stroke="#c00000" strokeWidth="2" />
        <path d="M928 106l-14 16 16 6z" fill="#c00000" />
      </svg>
    </div>
  );
}
